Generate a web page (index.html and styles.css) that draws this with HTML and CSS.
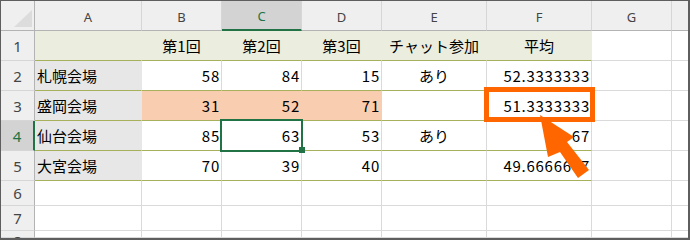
FILE: index.html
```html
<!DOCTYPE html>
<html lang="ja">
<head>
<meta charset="utf-8">
<title>Sheet</title>
<link rel="stylesheet" href="styles.css">
</head>
<body>
<div class="frame">
  <div class="grid">
    <div class="corner"><svg class="tri" width="33" height="29" viewBox="0 0 33 29"><polygon points="31,9 31,26 13,26" fill="#dcdcdc"/></svg></div>
    <div class="ch">A</div>
    <div class="ch">B</div>
    <div class="ch sel">C</div>
    <div class="ch">D</div>
    <div class="ch">E</div>
    <div class="ch">F</div>
    <div class="ch">G</div>
    <div class="ch last"></div>

    <div class="rh">1</div>
    <div class="c band t"></div>
    <div class="c band t ctr">第1回</div>
    <div class="c band t ctr">第2回</div>
    <div class="c band t ctr">第3回</div>
    <div class="c band t ctr">チャット参加</div>
    <div class="c band t ctr">平均</div>
    <div class="c"></div>
    <div class="c last"></div>

    <div class="rh">2</div>
    <div class="c name t">札幌会場</div>
    <div class="c t num">58</div>
    <div class="c t num">84</div>
    <div class="c t num">15</div>
    <div class="c t ctr">あり</div>
    <div class="c t num">52.3333333</div>
    <div class="c"></div>
    <div class="c last"></div>

    <div class="rh">3</div>
    <div class="c name t">盛岡会場</div>
    <div class="c peach t num">31</div>
    <div class="c peach t num">52</div>
    <div class="c peach t num">71</div>
    <div class="c t"></div>
    <div class="c t num">51.3333333</div>
    <div class="c"></div>
    <div class="c last"></div>

    <div class="rh sel">4</div>
    <div class="c name t">仙台会場</div>
    <div class="c t num">85</div>
    <div class="c t num">63</div>
    <div class="c t num">53</div>
    <div class="c t ctr">あり</div>
    <div class="c t num">67</div>
    <div class="c"></div>
    <div class="c last"></div>

    <div class="rh">5</div>
    <div class="c name t">大宮会場</div>
    <div class="c t num">70</div>
    <div class="c t num">39</div>
    <div class="c t num">40</div>
    <div class="c t"></div>
    <div class="c t num">49.6666667</div>
    <div class="c"></div>
    <div class="c last"></div>

    <div class="rh">6</div>
    <div class="c"></div><div class="c"></div><div class="c"></div><div class="c"></div><div class="c"></div><div class="c"></div><div class="c"></div><div class="c last"></div>

    <div class="rh">7</div>
    <div class="c"></div><div class="c"></div><div class="c"></div><div class="c"></div><div class="c"></div><div class="c"></div><div class="c"></div><div class="c last"></div>

    <div class="rh top">8</div>
    <div class="c"></div><div class="c"></div><div class="c"></div><div class="c"></div><div class="c"></div><div class="c"></div><div class="c"></div><div class="c last"></div>
  </div>

  <div class="selbox"></div>
  <div class="handle"></div>
  <div class="callout"></div>
  <svg class="arrow" width="690" height="240" viewBox="0 0 690 240">
    <polygon points="540,115 574,137 567,142 589,170 578,178 560,152 548,157" fill="#ff6600"/>
  </svg>
</div>
</body>
</html>
```

FILE: styles.css
```css
html, body {
  margin: 0;
  padding: 0;
  background: #ffffff;
}

.frame {
  position: relative;
  width: 690px;
  height: 240px;
  box-sizing: border-box;
  border-style: solid;
  border-color: #5e5e5e;
  border-width: 1px 2px 2px 1px;
  overflow: hidden;
  font-family: "Noto Sans CJK JP", sans-serif;
}

.grid {
  display: grid;
  grid-template-columns: 34px 107px 80px 80px 80px 105px 105px 80px 1fr;
  grid-template-rows: 30px 30px 30px 30px 30px 30px 25px 25px 1fr;
  height: 100%;
}

.grid > div {
  box-sizing: border-box;
  border-right: 1px solid #dadada;
  border-bottom: 1px solid #dadada;
  display: flex;
  align-items: center;
  white-space: nowrap;
  min-width: 0;
  min-height: 0;
  color: #000;
  font-size: 15px;
  line-height: 20px;
}

.grid > .last {
  border-right: none;
}

.grid > .corner {
  background: #efefef;
  border-right-color: #b3b3b3;
  border-bottom-color: #b3b3b3;
}

.tri {
  display: block;
}

.grid > .ch {
  background: #efefef;
  justify-content: center;
  font-family: "Noto Sans", sans-serif;
  font-size: 13px;
  color: #444444;
  border-right-color: #d6d6d6;
  border-bottom-color: #b3b3b3;
  padding-top: 2px;
}

.grid > .ch.sel {
  background: #d3d3d3;
  color: #217346;
  border-bottom: 2px solid #217346;
}

.grid > .rh {
  background: #efefef;
  justify-content: center;
  font-family: "Noto Sans", sans-serif;
  font-size: 15px;
  color: #444444;
  border-right-color: #b3b3b3;
  border-bottom-color: #d6d6d6;
}

.grid > .rh.sel {
  background: #d3d3d3;
  color: #217346;
  border-right: 2px solid #217346;
}

.grid > .rh.top {
  align-items: flex-start;
  padding-top: 0;
}

.grid > .band {
  background: #ebedde;
  border-right-color: transparent;
}

.grid > .name {
  background: #e7e7e7;
  border-right-color: transparent;
  padding-left: 2px;
}

.grid > .peach {
  background: #f9cdaf;
  border-right-color: transparent;
}

.grid > .t {
  border-bottom-color: #a7b15c;
}

.grid > .num {
  justify-content: flex-end;
  padding-right: 1px;
  letter-spacing: 0.75px;
}

.grid > .ctr {
  justify-content: center;
}

.selbox {
  position: absolute;
  left: 219px;
  top: 118px;
  width: 83px;
  height: 33px;
  box-sizing: border-box;
  border: 2px solid #217346;
}

.handle {
  position: absolute;
  left: 298px;
  top: 146px;
  width: 6px;
  height: 6px;
  background: #217346;
}

.callout {
  position: absolute;
  left: 483px;
  top: 86px;
  width: 111px;
  height: 35px;
  box-sizing: border-box;
  border: 5px solid #ff6600;
}

.arrow {
  position: absolute;
  left: -1px;
  top: -1px;
  display: block;
}
```
